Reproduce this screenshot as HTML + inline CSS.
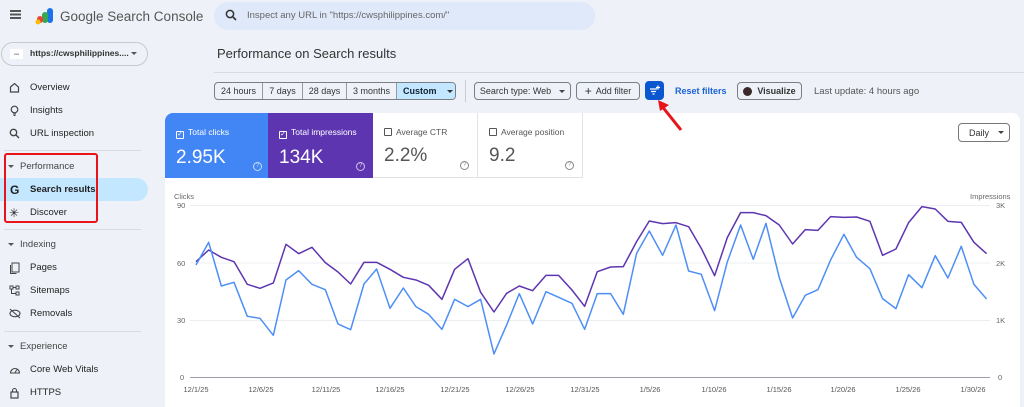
<!DOCTYPE html>
<html><head><meta charset="utf-8"><style>
*{box-sizing:border-box;margin:0;padding:0}
body{width:1024px;height:407px;overflow:hidden;background:#eef2f8;font-family:"Liberation Sans",Arial,sans-serif;color:#1f1f1f;position:relative}
.a{position:absolute}
.nav{position:absolute;left:0;width:148px;height:23px;font-size:9.5px;color:#1f1f1f;display:flex;align-items:center;padding-left:30px}
.nav svg{position:absolute;left:9px;top:6px}
.sec{position:absolute;left:8px;font-size:9.5px;color:#444;display:flex;align-items:center}
.sec:before{content:"";border:3px solid transparent;border-top:3.5px solid #555;margin:3px 6px 0 0}
.hr{position:absolute;left:4px;width:137px;height:1px;background:#d8dce2}
.btn{position:absolute;top:82px;height:18px;border:1px solid #7a7f85;border-radius:4px;font-size:9px;display:flex;align-items:center;justify-content:center;color:#333;background:#fff0}
.card{position:absolute;top:113px;height:65px;width:105px;font-size:8.5px;padding:14px 0 0 11px}
.card .v{font-size:19px;margin-top:8px}
.cb{display:inline-block;width:8px;height:8px;border:1px solid currentColor;vertical-align:-1px;margin-right:4px;border-radius:1px;font-size:7px;line-height:6px;text-align:center}
.q{position:absolute;right:8px;bottom:7px;width:9px;height:9px;border:1px solid currentColor;border-radius:50%;font-size:6px;text-align:center;line-height:7px;opacity:.7}
.yl{position:absolute;font-size:7.5px;color:#666}
.xl{position:absolute;top:385px;font-size:7.5px;color:#555;width:40px;text-align:center}
</style></head><body>
<!-- header -->
<div class="a" style="left:10px;top:10px;width:11px;height:1.6px;background:#555;box-shadow:0 3.5px 0 #555,0 7px 0 #555"></div>
<svg class="a" style="left:34px;top:6px" width="20" height="20"><rect x="13" y="2" width="6" height="15" rx="3" fill="#1a73e8"/><rect x="8" y="6" width="6" height="11" rx="3" fill="#34a853"/><rect x="3" y="10" width="6" height="7" rx="3" fill="#ea4335"/><circle cx="4" cy="16" r="2.5" fill="#fbbc04"/></svg>
<div class="a" style="left:60px;top:9px;font-size:13.5px;color:#555">Google Search Console</div>
<div class="a" style="left:214px;top:2px;width:381px;height:28px;border-radius:14px;background:#e0e9fa"></div>
<svg class="a" style="left:225px;top:9px" width="12" height="12"><circle cx="5" cy="5" r="3.6" fill="none" stroke="#333" stroke-width="1.5"/><path d="M8 8l3 3" stroke="#333" stroke-width="1.6"/></svg>
<div class="a" style="left:247px;top:10px;font-size:9.5px;color:#666">Inspect any URL in "https://cwsphilippines.com/"</div>
<!-- property -->
<div class="a" style="left:1px;top:42px;width:147px;height:24px;border:1px solid #c7c9cc;border-radius:12px"></div>
<div class="a" style="left:10px;top:49px;width:13px;height:10px;background:#fff;font-size:3px;color:#333;text-align:center;line-height:10px">cws</div>
<div class="a" style="left:30px;top:48px;font-size:8.5px;font-weight:bold;color:#333">https://cwsphilippines....</div>
<div class="a" style="left:131px;top:52px;border:3px solid transparent;border-top:3.5px solid #555"></div>
<!-- nav -->
<div class="nav" style="top:76px"><svg width="11" height="11"><path d="M1.5 5L5.5 1.5 9.5 5v5h-8z" fill="none" stroke="#444" stroke-width="1.2"/></svg>Overview</div>
<div class="nav" style="top:99px"><svg width="11" height="11"><circle cx="5.5" cy="4.5" r="3.3" fill="none" stroke="#444" stroke-width="1.2"/><path d="M4 9h3M4.5 10.5h2" stroke="#444"/></svg>Insights</div>
<div class="nav" style="top:122px"><svg width="11" height="11"><circle cx="4.5" cy="4.5" r="3.2" fill="none" stroke="#444" stroke-width="1.3"/><path d="M7 7l3 3" stroke="#444" stroke-width="1.4"/></svg>URL inspection</div>
<div class="hr" style="top:150px"></div>
<div class="sec" style="top:161px">Performance</div>
<div class="a" style="left:0;top:178px;width:148px;height:23px;border-radius:0 12px 12px 0;background:#c2e7ff"></div>
<div class="nav" style="top:178px;font-weight:bold;color:#1f1f1f"><span style="position:absolute;left:10px;font-size:12px;font-weight:bold">G</span>Search results</div>
<div class="nav" style="top:201px"><span style="position:absolute;left:9px;font-size:12px">✳</span>Discover</div>
<div class="a" style="left:4px;top:153px;width:94px;height:70px;border:2.5px solid #e8141a;border-radius:3px"></div>
<div class="hr" style="top:229px"></div>
<div class="sec" style="top:239px">Indexing</div>
<div class="nav" style="top:256px"><svg width="11" height="12"><rect x="3" y="1" width="7" height="9" fill="none" stroke="#444"/><path d="M1.5 3v8.5h6" fill="none" stroke="#444"/></svg>Pages</div>
<div class="nav" style="top:279px"><svg width="12" height="11"><rect x="1" y="1" width="3" height="3" fill="none" stroke="#444"/><rect x="7" y="1" width="3" height="3" fill="none" stroke="#444"/><rect x="7" y="7" width="3" height="3" fill="none" stroke="#444"/><path d="M4 2.5h3M2.5 4v4.5h4.5" fill="none" stroke="#444"/></svg>Sitemaps</div>
<div class="nav" style="top:302px"><svg width="12" height="11"><ellipse cx="6" cy="5.5" rx="5" ry="3.3" fill="none" stroke="#444" stroke-width="1.1"/><path d="M1 1l10 9" stroke="#444" stroke-width="1.1"/></svg>Removals</div>
<div class="hr" style="top:331px"></div>
<div class="sec" style="top:341px">Experience</div>
<div class="nav" style="top:358px"><svg width="12" height="11"><path d="M1.5 9a4.5 4.5 0 1 1 9 0z" fill="none" stroke="#444" stroke-width="1.1"/><path d="M6 8.5l2-3" stroke="#444"/></svg>Core Web Vitals</div>
<div class="nav" style="top:381px"><svg width="11" height="12"><rect x="2" y="5" width="7" height="6" fill="none" stroke="#444" stroke-width="1.2"/><path d="M3.5 5V3.5a2 2 0 0 1 4 0V5" fill="none" stroke="#444"/></svg>HTTPS</div>
<!-- title -->
<div class="a" style="left:217px;top:46px;font-size:13px;color:#333">Performance on Search results</div>
<div class="a" style="left:214px;top:72px;width:810px;height:1px;background:#d8dce2"></div>
<!-- filter bar -->
<div class="a" style="left:214px;top:82px;width:242px;height:18px;border:1px solid #7a7f85;border-radius:4px;overflow:hidden;display:flex;font-size:9px;color:#333">
<div style="width:48px;text-align:center;line-height:16px;border-right:1px solid #999">24 hours</div>
<div style="width:40px;text-align:center;line-height:16px;border-right:1px solid #999">7 days</div>
<div style="width:44px;text-align:center;line-height:16px;border-right:1px solid #999">28 days</div>
<div style="width:50px;text-align:center;line-height:16px;border-right:1px solid #999">3 months</div>
<div style="flex:1;line-height:16px;background:#c2e7ff;padding-left:6px;font-weight:bold;color:#123">Custom <span style="display:inline-block;margin-left:8px;border:3px solid transparent;border-top:3.5px solid #333;vertical-align:-2px"></span></div></div>
<div class="a" style="left:465px;top:80px;width:1px;height:22px;background:#ccc"></div>
<div class="btn" style="left:474px;width:97px">Search type: Web <span style="display:inline-block;margin-left:8px;border:3px solid transparent;border-top:3.5px solid #444;margin-top:3px"></span></div>
<div class="btn" style="left:576px;width:64px"><span style="font-size:12px;margin-right:4px">+</span>Add filter</div>
<div class="a" style="left:645px;top:81px;width:19px;height:19px;border-radius:4px;background:#0b57d0"></div>
<svg class="a" style="left:648px;top:84px" width="13" height="13"><path d="M2 5h7M3 7.5h5M4.5 10h2" stroke="#fff" stroke-width="1.2"/><path d="M10 1.5v4M8 3.5h4" stroke="#fff" stroke-width="1.2"/></svg>
<div class="a" style="left:675px;top:86px;font-size:9px;color:#1a61d6;font-weight:bold">Reset filters</div>
<div class="btn" style="left:737px;width:65px;font-weight:bold"><span style="display:inline-block;width:9px;height:9px;border-radius:50%;background:#3a2a2a;margin-right:5px"></span>Visualize</div>
<div class="a" style="left:814px;top:86px;font-size:9.5px;color:#555">Last update: 4 hours ago</div>
<!-- panel -->
<div class="a" style="left:165px;top:113px;width:855px;height:294px;background:#fff;border-radius:8px 8px 0 0"></div>
<svg class="a" style="left:650px;top:95px" width="40" height="40"><path d="M31 35L11 10" stroke="#e8141a" stroke-width="3"/><path d="M8 5l11 5-9 6z" fill="#e8141a"/></svg>
<div class="card" style="left:165px;background:#4285f4;color:#fff;border-radius:8px 0 0 0"><span class="cb">✓</span>Total clicks<div class="v">2.95K</div><div class="q">?</div></div>
<div class="card" style="left:268px;background:#5e35b1;color:#fff"><span class="cb">✓</span>Total impressions<div class="v">134K</div><div class="q">?</div></div>
<div class="card" style="left:373px;color:#555;border-right:1px solid #e3e3e3;border-bottom:1px solid #e3e3e3"><span class="cb"></span>Average CTR<div class="v" style="color:#555">2.2%</div><div class="q">?</div></div>
<div class="card" style="left:478px;color:#555;border-right:1px solid #e3e3e3;border-bottom:1px solid #e3e3e3"><span class="cb"></span>Average position<div class="v" style="color:#555">9.2</div><div class="q">?</div></div>
<div class="a" style="left:958px;top:123px;width:52px;height:19px;border:1px solid #777;border-radius:4px;font-size:9px;color:#333;padding:4px 0 0 10px">Daily<span style="position:absolute;left:39px;top:7px;border:3px solid transparent;border-top:3.5px solid #444"></span></div>
<!-- chart -->
<div class="yl" style="left:174px;top:192px">Clicks</div>
<div class="yl" style="left:970px;top:192px">Impressions</div>
<div class="yl" style="left:177px;top:201px">90</div>
<div class="yl" style="left:177px;top:259px">60</div>
<div class="yl" style="left:177px;top:316px">30</div>
<div class="yl" style="left:180px;top:373px">0</div>
<div class="yl" style="left:996px;top:201px">3K</div>
<div class="yl" style="left:996px;top:259px">2K</div>
<div class="yl" style="left:996px;top:316px">1K</div>
<div class="yl" style="left:998px;top:373px">0</div>
<svg class="a" style="left:0;top:0" width="1024" height="407">
<g stroke="#eceff1" stroke-width="1"><path d="M190 205.5H990M190 263H990M190 320.5H990"/></g>
<path d="M190 377.5H990" stroke="#9aa0a6" stroke-width="1"/>
<g transform="translate(160,190) scale(0.3333)" fill="none" stroke-width="4.5" stroke-linejoin="round">
<polyline stroke="#5e35b1" points="108,215 146,180 184,202 222,215 262,283 300,295 340,279 378,163 416,191 456,172 496,218 534,246 572,282 612,217 650,217 690,238 730,262 768,270 806,286 846,328 884,238 924,206 962,307 1002,366 1040,310 1078,288 1118,302 1158,256 1196,256 1236,300 1274,349 1312,245 1352,231 1390,230 1430,155 1468,93 1508,101 1548,98 1586,110 1624,175 1664,257 1702,143 1742,68 1780,68 1818,77 1858,105 1898,162 1936,119 1974,121 2012,80 2052,82 2090,81 2130,94 2168,196 2208,177 2246,98 2286,50 2326,57 2364,94 2404,97 2442,157 2480,191"/>
<polyline stroke="#4e8ff5" points="108,225 146,157 184,288 222,277 262,379 300,385 340,436 378,270 416,242 456,283 496,299 534,402 572,419 612,282 650,237 690,355 730,294 768,350 806,373 846,418 884,328 924,350 962,328 1002,492 1040,405 1078,311 1118,402 1158,305 1196,322 1236,340 1274,418 1312,311 1352,311 1390,373 1430,190 1468,123 1508,196 1548,105 1586,243 1624,253 1664,362 1702,216 1742,105 1780,208 1818,100 1858,263 1898,384 1936,316 1974,299 2012,210 2052,133 2090,202 2130,236 2168,326 2208,356 2246,254 2286,293 2326,197 2364,264 2404,169 2442,283 2480,327"/>
</g>
</svg>
<div class="xl" style="left:176px">12/1/25</div>
<div class="xl" style="left:241px">12/6/25</div>
<div class="xl" style="left:306px">12/11/25</div>
<div class="xl" style="left:370px">12/16/25</div>
<div class="xl" style="left:435px">12/21/25</div>
<div class="xl" style="left:500px">12/26/25</div>
<div class="xl" style="left:565px">12/31/25</div>
<div class="xl" style="left:630px">1/5/26</div>
<div class="xl" style="left:694px">1/10/26</div>
<div class="xl" style="left:759px">1/15/26</div>
<div class="xl" style="left:823px">1/20/26</div>
<div class="xl" style="left:888px">1/25/26</div>
<div class="xl" style="left:953px">1/30/26</div>
</body></html>
